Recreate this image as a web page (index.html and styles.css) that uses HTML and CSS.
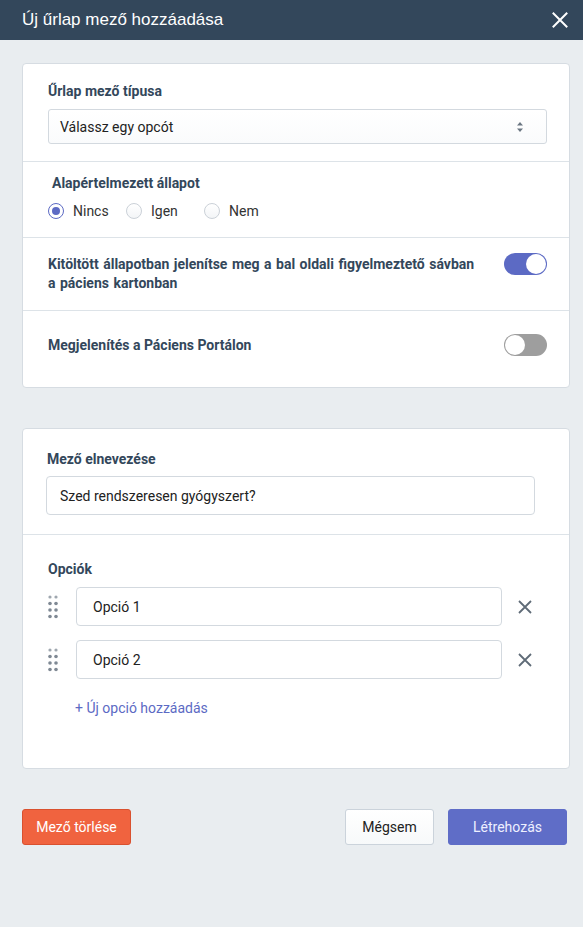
FILE: index.html
```html
<!DOCTYPE html>
<html lang="hu">
<head>
<meta charset="utf-8">
<title>Új űrlap mező hozzáadása</title>
<link rel="stylesheet" href="styles.css">
</head>
<body>
<header class="header">
  <h1 class="title">Új űrlap mező hozzáadása</h1>
  <button class="close" aria-label="Bezárás">
    <svg width="16" height="16" viewBox="0 0 16 16"><path d="M1.5 1.5 L14.5 14.5 M14.5 1.5 L1.5 14.5" stroke="#fff" stroke-width="2" stroke-linecap="square"/></svg>
  </button>
</header>

<main class="content">
  <section class="card">
    <div class="sec sec-type">
      <div class="lbl">Űrlap mező típusa</div>
      <div class="select">
        <span>Válassz egy opcót</span>
        <svg class="arrows" width="6" height="10" viewBox="0 0 6 10"><path d="M3 0 L6 3.5 L0 3.5 Z M3 10 L6 6.5 L0 6.5 Z" fill="#6b7682"/></svg>
      </div>
    </div>
    <div class="sec sec-default">
      <div class="lbl indent">Alapértelmezett állapot</div>
      <div class="radios">
        <label class="radio"><span class="dot checked"></span>Nincs</label>
        <label class="radio"><span class="dot"></span>Igen</label>
        <label class="radio"><span class="dot"></span>Nem</label>
      </div>
    </div>
    <div class="sec sec-toggle">
      <div class="lbl toggle-text">Kitöltött állapotban jelenítse meg a bal oldali figyelmeztető sávban a páciens kartonban</div>
      <span class="toggle on"><span class="knob"></span></span>
    </div>
    <div class="sec sec-toggle sec-last">
      <div class="lbl toggle-text">Megjelenítés a Páciens Portálon</div>
      <span class="toggle off"><span class="knob"></span></span>
    </div>
  </section>

  <section class="card card2">
    <div class="sec sec-name">
      <div class="lbl">Mező elnevezése</div>
      <div class="input wide">Szed rendszeresen gyógyszert?</div>
    </div>
    <div class="sec sec-options">
      <div class="lbl">Opciók</div>
      <div class="option-row">
        <svg class="handle" width="10" height="24" viewBox="0 0 10 24"><g fill="#7f8994"><circle cx="2" cy="2" r="1.6" opacity=".75"/><circle cx="8" cy="2" r="1.6" opacity=".75"/><circle cx="2" cy="8.5" r="1.8"/><circle cx="8" cy="8.5" r="1.8"/><circle cx="2" cy="15" r="1.8"/><circle cx="8" cy="15" r="1.8"/><circle cx="2" cy="21.5" r="1.8"/><circle cx="8" cy="21.5" r="1.8"/></g></svg>
        <div class="input opt">Opció 1</div>
        <svg class="remove" width="14" height="14" viewBox="0 0 14 14"><path d="M1 1 L13 13 M13 1 L1 13" stroke="#5f6b77" stroke-width="1.8"/></svg>
      </div>
      <div class="option-row">
        <svg class="handle" width="10" height="24" viewBox="0 0 10 24"><g fill="#7f8994"><circle cx="2" cy="2" r="1.6" opacity=".75"/><circle cx="8" cy="2" r="1.6" opacity=".75"/><circle cx="2" cy="8.5" r="1.8"/><circle cx="8" cy="8.5" r="1.8"/><circle cx="2" cy="15" r="1.8"/><circle cx="8" cy="15" r="1.8"/><circle cx="2" cy="21.5" r="1.8"/><circle cx="8" cy="21.5" r="1.8"/></g></svg>
        <div class="input opt">Opció 2</div>
        <svg class="remove" width="14" height="14" viewBox="0 0 14 14"><path d="M1 1 L13 13 M13 1 L1 13" stroke="#5f6b77" stroke-width="1.8"/></svg>
      </div>
      <a class="add-link">+ Új opció hozzáadás</a>
    </div>
  </section>

  <div class="actions">
    <button class="btn btn-danger">Mező törlése</button>
    <div class="actions-right">
      <button class="btn btn-default">Mégsem</button>
      <button class="btn btn-primary">Létrehozás</button>
    </div>
  </div>
</main>
</body>
</html>
```

FILE: styles.css
```css
* { box-sizing: border-box; }

html, body {
  margin: 0;
  padding: 0;
  background: #e9edf0;
  font-family: Roboto, "Noto Sans", Arial, sans-serif;
  color: #222;
}

.header {
  height: 40px;
  background: #33475b;
  display: flex;
  align-items: center;
  justify-content: space-between;
  padding: 0 15px 0 22px;
}

.title {
  margin: 0;
  font-family: "Liberation Sans", Arial, sans-serif;
  font-weight: normal;
  font-size: 17px;
  color: #fff;
}

.close {
  background: none;
  border: 0;
  padding: 0;
  width: 16px;
  height: 16px;
  display: flex;
}

.content {
  padding: 23px 13px 40px 22px;
}

.card {
  width: 548px;
  background: #fff;
  border: 1px solid #d6dce2;
  border-radius: 4px;
}

.card2 {
  margin-top: 40px;
}

.sec + .sec {
  border-top: 1px solid #dde3e8;
}

.lbl {
  font-size: 14px;
  font-weight: 700;
  line-height: 17px;
  color: #33475b;
}

.indent { padding-left: 4px; }

.sec-type {
  padding: 19px 22px 17px 25px;
}

.select {
  margin-top: 9px;
  height: 35px;
  border: 1px solid #d3d9df;
  border-radius: 3px;
  background: linear-gradient(#fff, #fafbfc);
  display: flex;
  align-items: center;
  justify-content: space-between;
  padding: 0 23px 0 11px;
  font-size: 14px;
  color: #222;
}

.sec-default {
  padding: 13px 22px 17px 25px;
}

.radios {
  display: flex;
  margin-top: 10px;
  height: 18px;
  align-items: center;
}

.radio {
  display: flex;
  align-items: center;
  font-size: 14px;
  color: #333;
  width: 78px;
  gap: 9px;
}

.dot {
  width: 16px;
  height: 16px;
  border-radius: 50%;
  border: 1px solid #cbd1d8;
  background: linear-gradient(#fff, #f3f5f7);
  display: inline-flex;
  align-items: center;
  justify-content: center;
  flex: none;
}

.dot.checked {
  border-color: #5c6ac4;
  background: #fff;
}

.dot.checked::after {
  content: "";
  width: 8px;
  height: 8px;
  border-radius: 50%;
  background: #5c6ac4;
}

.sec-toggle {
  display: flex;
  justify-content: space-between;
  align-items: flex-start;
  padding: 17px 22px 17px 25px;
}

.toggle-text {
  line-height: 19px;
  width: 430px;
  word-spacing: 1px;
}

.toggle {
  width: 43px;
  height: 22px;
  border-radius: 11px;
  display: flex;
  align-items: center;
  padding: 1px;
  margin-top: -2px;
  flex: none;
}

.knob {
  width: 20px;
  height: 20px;
  border-radius: 50%;
  background: #fff;
}

.toggle.on {
  background: #5c6ac4;
  justify-content: flex-end;
}

.toggle.off {
  background: #9e9e9e;
  justify-content: flex-start;
}

.sec-last {
  align-items: center;
  padding: 23px 22px 31px 25px;
}

.sec-last .toggle-text { word-spacing: 0; }

.sec-last .toggle { margin-top: 0; }

.sec-name {
  padding: 22px 34px 19px 23px;
}

.sec-name .lbl { padding-left: 1px; }

.input {
  border: 1px solid #d3d9df;
  border-radius: 4px;
  background: #fff;
  height: 39px;
  display: flex;
  align-items: center;
  font-size: 14px;
  color: #222;
}

.input.wide {
  margin-top: 8px;
  padding-left: 13px;
}

.sec-options {
  padding: 26px 22px 51px 25px;
}

.option-row {
  display: flex;
  align-items: center;
  margin-top: 9px;
}

.option-row + .option-row {
  margin-top: 14px;
}

.handle {
  flex: none;
  margin-right: 18px;
}

.input.opt {
  width: 426px;
  padding-left: 16px;
}

.remove {
  margin-left: 16px;
  flex: none;
}

.add-link {
  display: block;
  margin-top: 21px;
  padding-left: 27px;
  font-size: 14px;
  line-height: 17px;
  color: #5c6ac4;
}

.actions {
  margin-top: 40px;
  display: flex;
  justify-content: space-between;
  width: 545px;
}

.actions-right {
  display: flex;
  gap: 14px;
}

.btn {
  font-family: Roboto, "Noto Sans", Arial, sans-serif;
  font-size: 14px;
  height: 36px;
  border-radius: 3px;
  padding: 0;
  white-space: nowrap;
  border: 1px solid transparent;
}

.btn-danger {
  background: #f0633f;
  border-color: #d9512f;
  color: #fff;
  width: 109px;
}

.btn-default {
  background: linear-gradient(#fff, #f7f9fa);
  border-color: #cbd3db;
  color: #222;
  width: 89px;
}

.btn-primary {
  background: #5f6dc7;
  border-color: #5f6dc7;
  color: #eef0ff;
  width: 119px;
}
```
